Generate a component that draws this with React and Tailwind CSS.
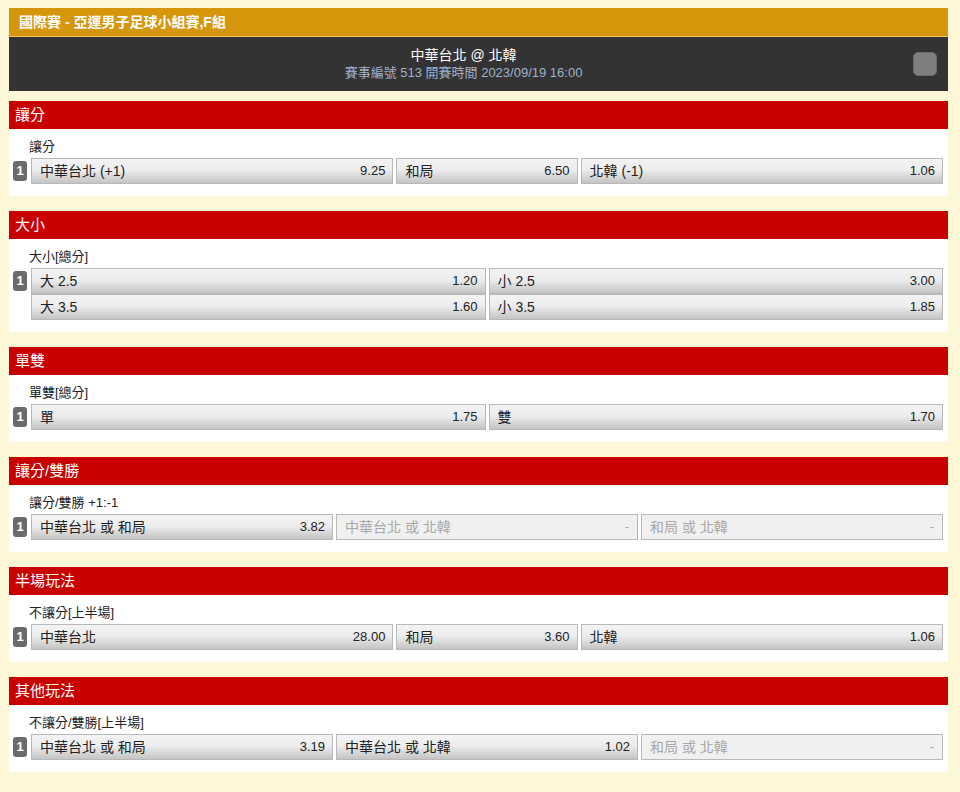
import React from "react";

const font = "font-['Liberation_Sans','Noto_Sans_CJK_TC',sans-serif]";

function Badge() {
  return (
    <div className="w-[14px] h-[20px] mt-[3px] mr-[4px] shrink-0 rounded-[3px] bg-[#6b6b6b] text-white font-bold text-[13px] leading-[20px] text-center">
      1
    </div>
  );
}

function Cell({ name, odds, disabled }) {
  if (disabled) {
    return (
      <div className="h-[26px] border border-[#b9b9b9] bg-[#f0f0f0] flex items-center justify-between pl-[8px] pr-[8px] text-[#a8a8a8]">
        <span className="text-[14px]">{name}</span>
        <span className="text-[13px]">-</span>
      </div>
    );
  }
  return (
    <div className="h-[26px] border border-[#b9b9b9] bg-[linear-gradient(to_bottom,#f3f3f3_0%,#ededed_45%,#c4c4c4_100%)] flex items-center justify-between pl-[8px] pr-[7px] text-[#222]">
      <span className="text-[14px]">{name}</span>
      <span className="text-[13px]">{odds}</span>
    </div>
  );
}

function Section({ title, label, rows, cols }) {
  return (
    <div className="mt-[15px]">
      <div className="h-[28px] bg-[#c80000] text-white text-[15px] leading-[28px] pl-[6px]">{title}</div>
      <div className="bg-white pt-[9px] pb-[12px] pl-[4px] pr-[5px]">
        <div className="pl-[16px] text-[13px] leading-[18px] text-[#222] mb-[2px]">{label}</div>
        <div className="flex items-start">
          <Badge />
          <div className="flex-1 flex flex-col">
            {rows.map((r, i) => (
              <div key={i} className={`grid gap-[3px] ${cols}`}>
                {r.map((c, j) => (
                  <Cell key={j} {...c} />
                ))}
              </div>
            ))}
          </div>
        </div>
      </div>
    </div>
  );
}

export default function App() {
  return (
    <div className={`min-h-[792px] bg-[#fef7d7] pt-[8px] pl-[9px] pb-[20px] ${font}`}>
      <div className="w-[939px]">
        <div className="h-[29px] bg-[#d6960c] border-b border-[#f3c768] text-white font-bold text-[14px] leading-[28px] pl-[10px]">
          國際賽 - 亞運男子足球小組賽,F組
        </div>
        <div className="h-[54px] bg-[#333333] flex items-start">
          <div className="flex-1 ml-[5px] pt-[10px] text-center leading-[17px]">
            <div className="text-white text-[14px]">中華台北 @ 北韓</div>
            <div className="text-[#a2b0cc] text-[13px]">賽事編號 513 開賽時間 2023/09/19 16:00</div>
          </div>
          <div className="w-[24px] h-[24px] mt-[15px] mr-[11px] rounded-[5px] bg-[#7f7f7f] border border-[#6a6a6a]" />
        </div>
        <div className="mt-[-5px]">
          <Section
            title="讓分"
            label="讓分"
            cols="grid-cols-[2fr_1fr_2fr]"
            rows={[[
              { name: "中華台北 (+1)", odds: "9.25" },
              { name: "和局", odds: "6.50" },
              { name: "北韓 (-1)", odds: "1.06" },
            ]]}
          />
          <Section
            title="大小"
            label="大小[總分]"
            cols="grid-cols-2"
            rows={[
              [
                { name: "大 2.5", odds: "1.20" },
                { name: "小 2.5", odds: "3.00" },
              ],
              [
                { name: "大 3.5", odds: "1.60" },
                { name: "小 3.5", odds: "1.85" },
              ],
            ]}
          />
          <Section
            title="單雙"
            label="單雙[總分]"
            cols="grid-cols-2"
            rows={[[
              { name: "單", odds: "1.75" },
              { name: "雙", odds: "1.70" },
            ]]}
          />
          <Section
            title="讓分/雙勝"
            label="讓分/雙勝 +1:-1"
            cols="grid-cols-3"
            rows={[[
              { name: "中華台北 或 和局", odds: "3.82" },
              { name: "中華台北 或 北韓", disabled: true },
              { name: "和局 或 北韓", disabled: true },
            ]]}
          />
          <Section
            title="半場玩法"
            label="不讓分[上半場]"
            cols="grid-cols-[2fr_1fr_2fr]"
            rows={[[
              { name: "中華台北", odds: "28.00" },
              { name: "和局", odds: "3.60" },
              { name: "北韓", odds: "1.06" },
            ]]}
          />
          <Section
            title="其他玩法"
            label="不讓分/雙勝[上半場]"
            cols="grid-cols-3"
            rows={[[
              { name: "中華台北 或 和局", odds: "3.19" },
              { name: "中華台北 或 北韓", odds: "1.02" },
              { name: "和局 或 北韓", disabled: true },
            ]]}
          />
        </div>
      </div>
    </div>
  );
}
